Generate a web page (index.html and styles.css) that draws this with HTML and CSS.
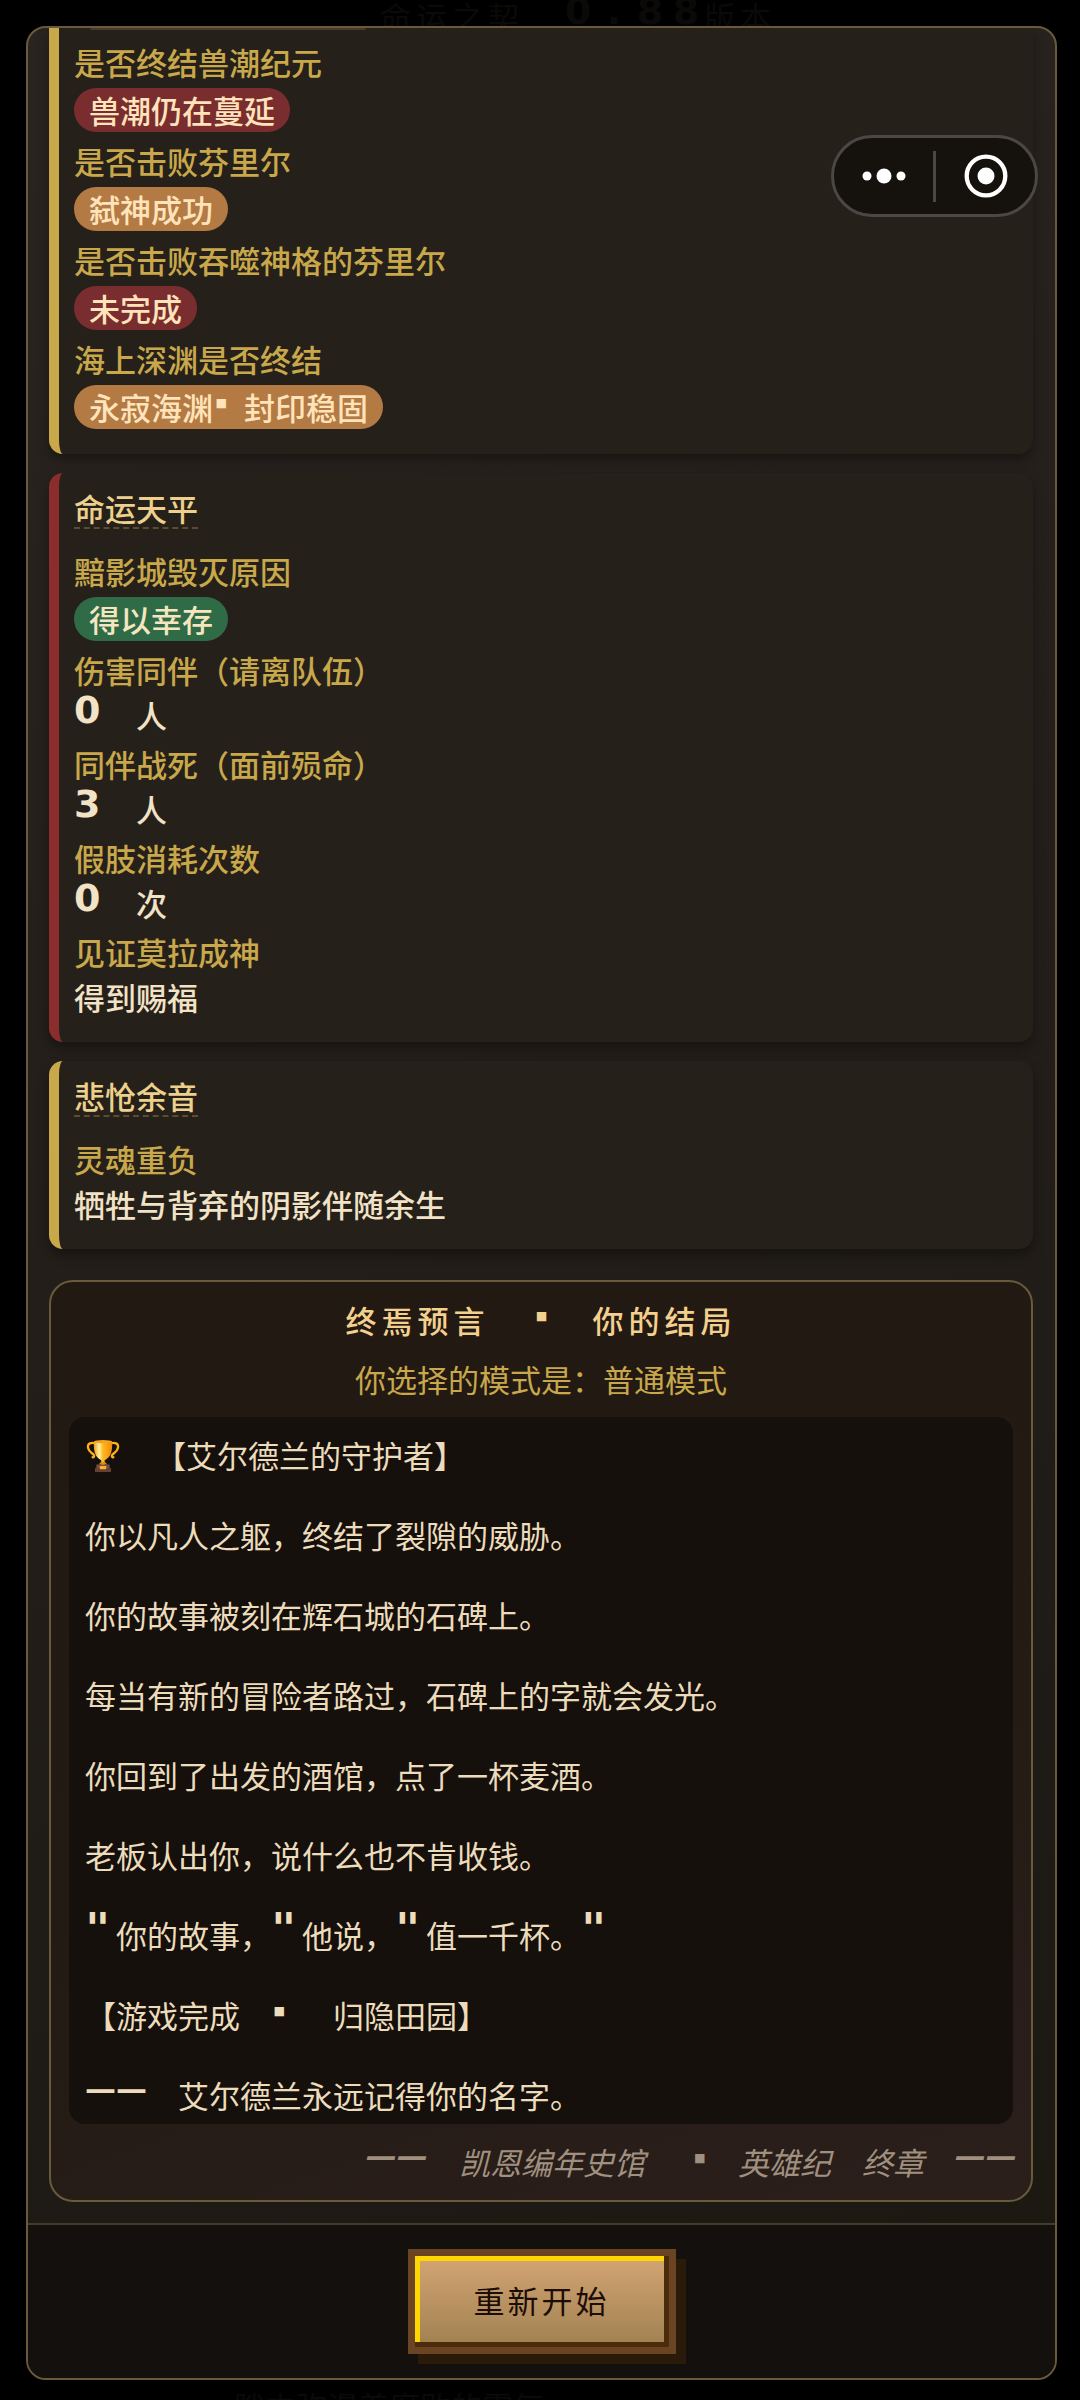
FILE: index.html
```html
<!DOCTYPE html>
<html lang="zh-CN">
<head>
<meta charset="utf-8">
<meta name="viewport" content="width=device-width, initial-scale=1">
<title>终焉预言</title>
<link rel="stylesheet" href="styles.css">
</head>
<body>
<div class="backdrop" aria-hidden="true">
  <div class="backdrop-title">命运之契&#12288;<span class="px">0</span><span class="px">.</span><span class="px">8</span><span class="px">8</span>版本</div>
  <div class="backdrop-line">隙中弥漫着腐败的霉气</div>
</div>

<main class="dialog">
  <div class="dialog-body">
    <section class="card card-gold card-cut">
      <div class="tag-edge"></div>
      <dl class="facts">
        <div class="fact"><dt>是否终结兽潮纪元</dt><dd><span class="tag tag-red">兽潮仍在蔓延</span></dd></div>
        <div class="fact"><dt>是否击败芬里尔</dt><dd><span class="tag tag-bronze">弑神成功</span></dd></div>
        <div class="fact"><dt>是否击败吞噬神格的芬里尔</dt><dd><span class="tag tag-red">未完成</span></dd></div>
        <div class="fact"><dt>海上深渊是否终结</dt><dd><span class="tag tag-bronze">永寂海渊<span class="dot">▪</span>封印稳固</span></dd></div>
      </dl>
    </section>

    <section class="card card-red">
      <h2 class="card-title">命运天平</h2>
      <dl class="facts">
        <div class="fact"><dt>黯影城毁灭原因</dt><dd><span class="tag tag-green">得以幸存</span></dd></div>
        <div class="fact"><dt>伤害同伴（请离队伍）</dt><dd><span class="px">0</span>&#12288;人</dd></div>
        <div class="fact"><dt>同伴战死（面前殒命）</dt><dd><span class="px">3</span>&#12288;人</dd></div>
        <div class="fact"><dt>假肢消耗次数</dt><dd><span class="px">0</span>&#12288;次</dd></div>
        <div class="fact"><dt>见证莫拉成神</dt><dd>得到赐福</dd></div>
      </dl>
    </section>

    <section class="card card-gold">
      <h2 class="card-title">悲怆余音</h2>
      <dl class="facts">
        <div class="fact"><dt>灵魂重负</dt><dd>牺牲与背弃的阴影伴随余生</dd></div>
      </dl>
    </section>

    <section class="ending">
      <h2 class="ending-title">终焉预言&#12288;<span class="dot">▪</span>&#12288;你的结局</h2>
      <p class="ending-mode">你选择的模式是：普通模式</p>
      <div class="story">
        <p class="story-head"><svg class="trophy" viewBox="0 0 36 36" role="img" aria-label="奖杯">
          <defs>
            <linearGradient id="cup" x1="0" x2="1" y1="0" y2="0">
              <stop offset="0" stop-color="#f19a12"/><stop offset=".3" stop-color="#fff3a0"/>
              <stop offset=".5" stop-color="#ffb81e"/><stop offset="1" stop-color="#f08a0c"/>
            </linearGradient>
          </defs>
          <path d="M9.5 4.500C5.500 3.500 1.800 4.500 2 8.500C2.300 13 6 14.500 8 16.500C9.300 18 8.500 20 7 19.200M26.500 4.500C30.500 3.500 34.200 4.500 34 8.500C33.700 13 30 14.500 28 16.500C26.700 18 27.500 20 29 19.200" fill="none" stroke="#fcaf1c" stroke-width="2.400" stroke-linecap="round"/>
          <path d="M8.500 2.500H27.500C28.500 13 26 20 19.800 22.500V27.500H16.200V22.500C10 20 7.500 13 8.500 2.500Z" fill="url(#cup)"/>
          <ellipse cx="18" cy="2.800" rx="9.500" ry="1.800" fill="#f7a51c"/>
          <path d="M13.500 27L15.500 24.500H20.500L22.500 27Z" fill="#e08a14"/>
          <path d="M11 27H25V31H11Z" fill="#7a5046"/>
          <path d="M9.500 30.500H26.500V35H9.500Z" fill="#664038"/>
          <rect x="14.500" y="28.500" width="7" height="3.500" rx="1" fill="#fbb326"/>
        </svg>&#12288;【艾尔德兰的守护者】</p>
        <p>你以凡人之躯，终结了裂隙的威胁。</p>
        <p>你的故事被刻在辉石城的石碑上。</p>
        <p>每当有新的冒险者路过，石碑上的字就会发光。</p>
        <p>你回到了出发的酒馆，点了一杯麦酒。</p>
        <p>老板认出你，说什么也不肯收钱。</p>
        <p><span class="quote">"</span>你的故事，<span class="quote">"</span>他说，<span class="quote">"</span>值一千杯。<span class="quote">"</span></p>
        <p>【游戏完成&#12288;<span class="dot">▪</span>&#12288;归隐田园】</p>
        <p><span class="dash">——</span>&#12288;艾尔德兰永远记得你的名字。</p>
      </div>
      <p class="signature"><span class="dash">——</span>&#12288;凯恩编年史馆&#12288;<span class="dot">▪</span>&#12288;英雄纪&#12288;终章&#12288;<span class="dash">——</span></p>
    </section>
  </div>

  <footer class="dialog-footer">
    <button type="button" class="restart">重新开始</button>
  </footer>
</main>

<div class="capsule">
  <button type="button" class="capsule-button" aria-label="更多">
    <svg width="44" height="44" viewBox="0 0 44 44"><g fill="#fff"><circle cx="5" cy="22" r="4.500"/><circle cx="22" cy="22" r="7.500"/><circle cx="39" cy="22" r="4.500"/></g></svg>
  </button>
  <span class="capsule-line"></span>
  <button type="button" class="capsule-button" aria-label="关闭">
    <svg width="44" height="44" viewBox="0 0 44 44"><circle cx="22" cy="22" r="19.300" fill="none" stroke="#fff" stroke-width="4.300"/><circle cx="22" cy="22" r="8.500" fill="#fff"/></svg>
  </button>
</div>
</body>
</html>
```
FILE: styles.css
```css
* {
  box-sizing: border-box;
}

body {
  margin: 0;
  min-height: 100vh;
  padding: 26px 23px 20px 26px;
  display: flex;
  flex-direction: column;
  position: relative;
  background: #000;
  color: #f2e2c6;
  font-family: "Noto Sans CJK SC", sans-serif;
  font-size: 31px;
  line-height: 40px;
  text-spacing-trim: space-all;
}

h2, p, dl, dd {
  margin: 0;
}

/* page that lies under the dialog, almost blacked out */
.backdrop {
  position: absolute;
  inset: 0;
  overflow: hidden;
  color: #0b0a08;
}

.backdrop-title {
  position: absolute;
  top: -4px;
  left: 0;
  right: 0;
  padding-left: 76px;
  text-align: center;
  letter-spacing: 5px;
}

.backdrop-title .px {
  width: 36px;
}

.backdrop-line {
  position: absolute;
  bottom: -26px;
  left: 234px;
}

/* dialog */
.dialog {
  position: relative;
  flex: 1;
  display: flex;
  flex-direction: column;
  overflow: hidden;
  border: 2px solid #6a5a3c;
  border-radius: 20px;
  background: linear-gradient(160deg, #29241f 0%, #231e1a 45%, #1b1812 100%);
}

.dialog-body {
  flex: 1;
  padding: 0 22px 20px 21px;
}

.card {
  margin-bottom: 19px;
  padding: 15px 15px 19px;
  border-left: 10px solid #c8a84b;
  border-radius: 14px;
  background: #25201a;
  box-shadow: 0 6px 12px rgba(0, 0, 0, .35);
}

.card-red {
  border-left-color: #8b2c2d;
}

.card-cut {
  padding-top: 0;
  border-top-left-radius: 0;
  border-top-right-radius: 0;
}

/* lower rim of the tag that has scrolled away */
.tag-edge {
  width: 276px;
  height: 2px;
  margin: 0 16px 9px;
  border-radius: 0 0 8px 8px;
  background: #4b3a2a;
}

.card-title {
  width: fit-content;
  margin-bottom: 19px;
  border-bottom: 2px dashed #5c4c30;
  color: #ecd08c;
  font-size: 31px;
  font-weight: 500;
  line-height: 39px;
}

.fact {
  margin-bottom: 4px;
}

.fact dt {
  color: #c8a84b;
  font-weight: 500;
  line-height: 45px;
}

.fact dd {
  font-weight: 500;
  line-height: 45px;
}

.tag {
  display: block;
  width: fit-content;
  margin: 4px 0 6px;
  padding: 0 15px;
  border-radius: 22px;
  color: #ffe3bb;
  line-height: 44px;
}

.tag-red {
  background: #7a2d2f;
}

.tag-bronze {
  background: #b37a44;
}

.tag-green {
  background: #2f6b47;
  color: #f5e6c0;
}

/* Latin signs that take one full-width cell and sit high on the line */
.px, .dot, .quote {
  position: relative;
  top: -5px;
  display: inline-block;
  width: 31px;
  height: 24px;
  font-family: "DejaVu Sans Mono", monospace;
  font-weight: 700;
  line-height: 24px;
  letter-spacing: 0;
}

.px {
  font-family: "DejaVu Sans", sans-serif;
  font-size: 38px;
}

.dot {
  top: -10px;
  padding-left: 1px;
  font-size: 24px;
}

.quote {
  font-size: 42px;
}

.dash {
  font-family: "DejaVu Sans", sans-serif;
  font-weight: 700;
  line-height: 0;
  vertical-align: 9px;
}

/* ending */
.ending {
  margin-top: 31px;
  padding: 18px;
  border: 2px solid #6a5a3c;
  border-radius: 24px;
  background: linear-gradient(160deg, #221913 0%, #241a14 50%, #2a1f1a 100%);
}

.ending-title {
  color: #f3d08e;
  font-size: 31px;
  font-weight: 500;
  letter-spacing: 5px;
  text-align: center;
}

.ending-mode {
  margin: 19px 0 18px;
  color: #c8a84b;
  text-align: center;
}

.story {
  display: flex;
  flex-direction: column;
  gap: 40px;
  padding: 18px 16px 9px;
  border-radius: 16px;
  background: #15100c;
  color: #ecdcbc;
}

.story-head {
  display: flex;
}

.trophy {
  width: 36px;
  height: 34px;
  margin: 4px 3px 0 0;
}

.signature {
  margin: 18px -4px 0 0;
  color: #a09080;
  font-style: italic;
  text-align: right;
}

/* footer */
.dialog-footer {
  padding: 24px;
  border-top: 2px solid #463a2a;
  background: #14100d;
  text-align: center;
}

.restart {
  display: block;
  margin: 0 auto;
  padding: 20px 59px 24px;
  border: 7px solid #6b4423;
  border-radius: 0;
  background: linear-gradient(#d4a574, #a08050);
  box-shadow: inset -5px -5px #4a2c0a, inset 5px 5px #ffd700, 10px 10px #2a1a0a;
  color: #1c0d06;
  font: inherit;
  letter-spacing: 3px;
  line-height: 47px;
}

/* mini-program capsule */
.capsule {
  position: absolute;
  top: 135px;
  right: 42px;
  width: 207px;
  height: 82px;
  display: flex;
  align-items: center;
  border: 3px solid #4a4744;
  border-radius: 41px;
  background: #15120d;
}

.capsule-button {
  flex: 1;
  display: grid;
  place-items: center;
  height: 100%;
  padding: 0;
  border: 0;
  background: none;
}

.capsule-line {
  width: 3px;
  height: 51px;
  background: #4a4744;
}
```
